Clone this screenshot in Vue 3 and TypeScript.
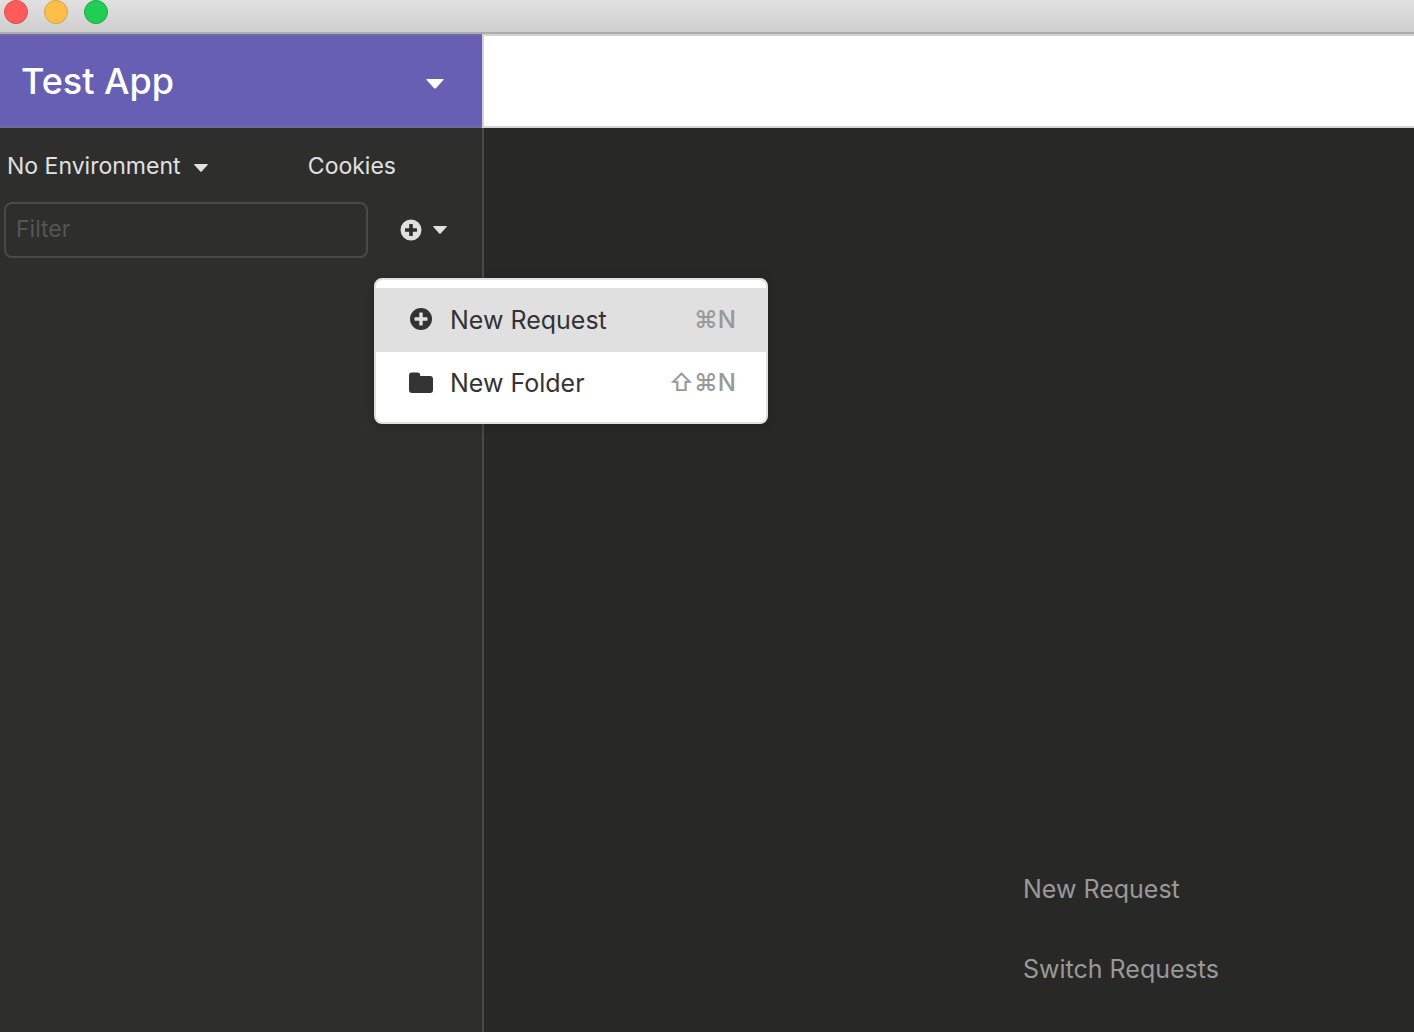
<script setup lang="ts">
interface MenuItem {
  label: string
  shortcut: string
  icon: 'plus' | 'folder'
  active: boolean
}

const menuItems: MenuItem[] = [
  { label: 'New Request', shortcut: '⌘N', icon: 'plus', active: true },
  { label: 'New Folder', shortcut: '⇧⌘N', icon: 'folder', active: false },
]

const lights: string[] = ['close', 'minimize', 'zoom']
const hints: string[] = ['New Request', 'Switch Requests']
</script>

<template>
  <div class="window">
    <header class="titlebar">
      <button v-for="light in lights" :key="light" type="button" class="light" :class="light" :aria-label="light"></button>
    </header>
    <div class="body">
      <aside class="sidebar">
        <button type="button" class="workspace">
          <span>Test App</span>
          <svg class="caret-large" viewBox="0 0 18 10" aria-hidden="true"><path d="M1 0H17Q18.300 0 17.400 1.100L9.900 9.200Q9 10 8.100 9.200L.6 1.100Q-.3 0 1 0Z" /></svg>
        </button>
        <div class="panel">
          <div class="env-row">
            <button type="button" class="env">
              <span>No Environment</span>
              <svg class="caret" viewBox="0 0 14 8" aria-hidden="true"><path d="M.8 0H13.200Q14.300 0 13.600.9L7.700 7.500Q7 8.200 6.300 7.500L.4.900Q-.3 0 .8 0Z" /></svg>
            </button>
            <button type="button" class="cookies">Cookies</button>
          </div>
          <div class="filter-row">
            <input class="filter" type="text" placeholder="Filter" aria-label="Filter" />
            <div class="create">
              <button type="button" class="create-button" aria-label="Create" aria-haspopup="menu" aria-expanded="true">
                <svg class="plus" viewBox="0 0 22 22" aria-hidden="true">
                  <path fill-rule="evenodd" d="M11 .5a10.500 10.500 0 1 0 0 21 10.500 10.500 0 0 0 0-21ZM9.800 5h2.400q.6 0 .6.6v3.600h3.600q.6 0 .6.6v2.400q0 .6-.6.6h-3.600v3.600q0 .6-.6.6H9.800q-.6 0-.6-.6v-3.600H5.600q-.6 0-.6-.6V9.800q0-.6.6-.6h3.600V5.600q0-.6.6-.6Z" />
                </svg>
                <svg class="caret" viewBox="0 0 14 8" aria-hidden="true"><path d="M.8 0H13.200Q14.300 0 13.600.9L7.700 7.500Q7 8.200 6.300 7.500L.4.900Q-.3 0 .8 0Z" /></svg>
              </button>
              <div class="menu" role="menu">
                <button v-for="item in menuItems" :key="item.label" type="button" role="menuitem" class="item" :class="{ active: item.active }">
                  <span class="item-icon">
                    <svg v-if="item.icon === 'plus'" class="menu-plus" viewBox="0 0 22 22" aria-hidden="true">
                      <path fill-rule="evenodd" d="M11 0a11 11 0 1 0 0 22 11 11 0 0 0 0-22ZM9.900 4.500h2.200q.6 0 .6.6v4.200h4.200q.6 0 .6.6v2.200q0 .6-.6.6h-4.200v4.200q0 .6-.6.6H9.900q-.6 0-.6-.6v-4.200H5.100q-.6 0-.6-.6V9.900q0-.6.6-.6h4.200V5.100q0-.6.6-.6Z" />
                    </svg>
                    <svg v-else class="folder" viewBox="0 0 24 21" aria-hidden="true">
                      <path d="M3 .5H8.500Q11.200.5 11.200 3.200V4H21Q24 4 24 7V18Q24 21 21 21H3Q0 21 0 18V3.500Q0 .5 3 .5Z" />
                    </svg>
                  </span>
                  <span class="item-label">{{ item.label }}</span>
                  <span class="shortcut">{{ item.shortcut }}</span>
                </button>
              </div>
            </div>
          </div>
        </div>
      </aside>
      <div class="content">
        <div class="toolbar"></div>
        <main class="main">
          <ul class="hints">
            <li v-for="hint in hints" :key="hint">{{ hint }}</li>
          </ul>
        </main>
      </div>
    </div>
  </div>
</template>

<style>
body {
  margin: 0;
  background: #282827;
}
</style>

<style scoped>
* {
  box-sizing: border-box;
}

button {
  margin: 0;
  padding: 0;
  border: 0;
  background: none;
  color: inherit;
  font: inherit;
  text-align: left;
}

svg {
  display: block;
  flex: none;
  fill: currentColor;
}

.window {
  display: flex;
  flex-direction: column;
  min-height: 100vh;
  color: #e0e0e0;
  font-family: Inter, "Liberation Sans", sans-serif;
  font-size: 23px;
  line-height: 32px;
}

.titlebar {
  display: flex;
  flex: none;
  gap: 16px;
  height: 34px;
  padding-left: 4px;
  border-bottom: 2px solid #acacac;
  background: linear-gradient(#e1e1e1, #cecece);
}

.light {
  width: 24px;
  height: 24px;
  border: 1px solid;
  border-radius: 50%;
}

.close {
  border-color: #e8484a;
  background: #ff5b5b;
}

.minimize {
  border-color: #dfa03c;
  background: #ffbe4a;
}

.zoom {
  border-color: #14ad3e;
  background: #20cd55;
}

.body {
  display: flex;
  flex: 1;
}

.sidebar {
  display: flex;
  flex: 0 0 484px;
  flex-direction: column;
}

.workspace {
  display: flex;
  align-items: center;
  justify-content: space-between;
  height: 94px;
  padding: 0 40px 0 21px;
  border: 2px solid #706ba3;
  border-width: 2px 0;
  background: #665fb3;
  color: #fff;
  font-size: 36px;
  font-weight: 500;
}

.caret-large {
  width: 18px;
  height: 10px;
  margin-top: 6px;
}

.caret {
  width: 14px;
  height: 8px;
}

.panel {
  flex: 1;
  padding: 20px 0 0 4px;
  border-right: 2px solid #4a4a49;
  background: #2e2e2d;
}

.env-row {
  display: flex;
  justify-content: space-between;
  padding: 2px 86px 0 3px;
}

.env {
  display: flex;
  align-items: center;
  gap: 13px;
}

.env .caret {
  margin-top: 4px;
}

.filter-row {
  display: flex;
  align-items: center;
  gap: 32px;
  margin-top: 20px;
}

.filter {
  width: 364px;
  height: 56px;
  padding: 0 10px 2px;
  border: 2px solid #4a4a49;
  border-radius: 8px;
  outline: 0;
  background: transparent;
  color: #e0e0e0;
  font: inherit;
}

.filter::placeholder {
  color: #555554;
  opacity: 1;
}

.create {
  position: relative;
}

.create-button {
  display: flex;
  align-items: center;
  gap: 11px;
}

.plus,
.menu-plus {
  width: 22px;
  height: 22px;
}

.menu {
  position: absolute;
  top: 59px;
  left: -26px;
  z-index: 1;
  width: 394px;
  padding: 8px 0;
  border: 2px solid #e0e0e0;
  border-radius: 8px;
  background: #fff;
  box-shadow: 0 2px 12px rgba(0, 0, 0, 0.2);
  color: #333;
  font-size: 25px;
}

.item {
  display: flex;
  align-items: center;
  width: 100%;
  height: 62px;
  padding: 0 30px 0 32px;
}

.active {
  height: 64px;
  background: #e0e0e0;
}

.item-icon {
  display: flex;
  justify-content: center;
  width: 26px;
  margin-right: 16px;
  padding-bottom: 2px;
}

.folder {
  width: 24px;
  height: 21px;
}

.item-label {
  flex: 1;
}

.shortcut {
  color: #999;
  font-size: 24px;
  font-weight: 500;
}

.content {
  display: flex;
  flex: 1;
  flex-direction: column;
}

.toolbar {
  height: 94px;
  margin-left: -2px;
  border: 2px solid #d4d4d4;
  border-right: 0;
  background: #fff;
}

.main {
  display: flex;
  flex: 1;
  align-items: flex-end;
  background: #282827;
}

.hints {
  display: flex;
  flex-direction: column;
  gap: 48px;
  margin: 0;
  padding: 0 0 47px 539px;
  color: #999;
  font-size: 25px;
  list-style: none;
}
</style>
